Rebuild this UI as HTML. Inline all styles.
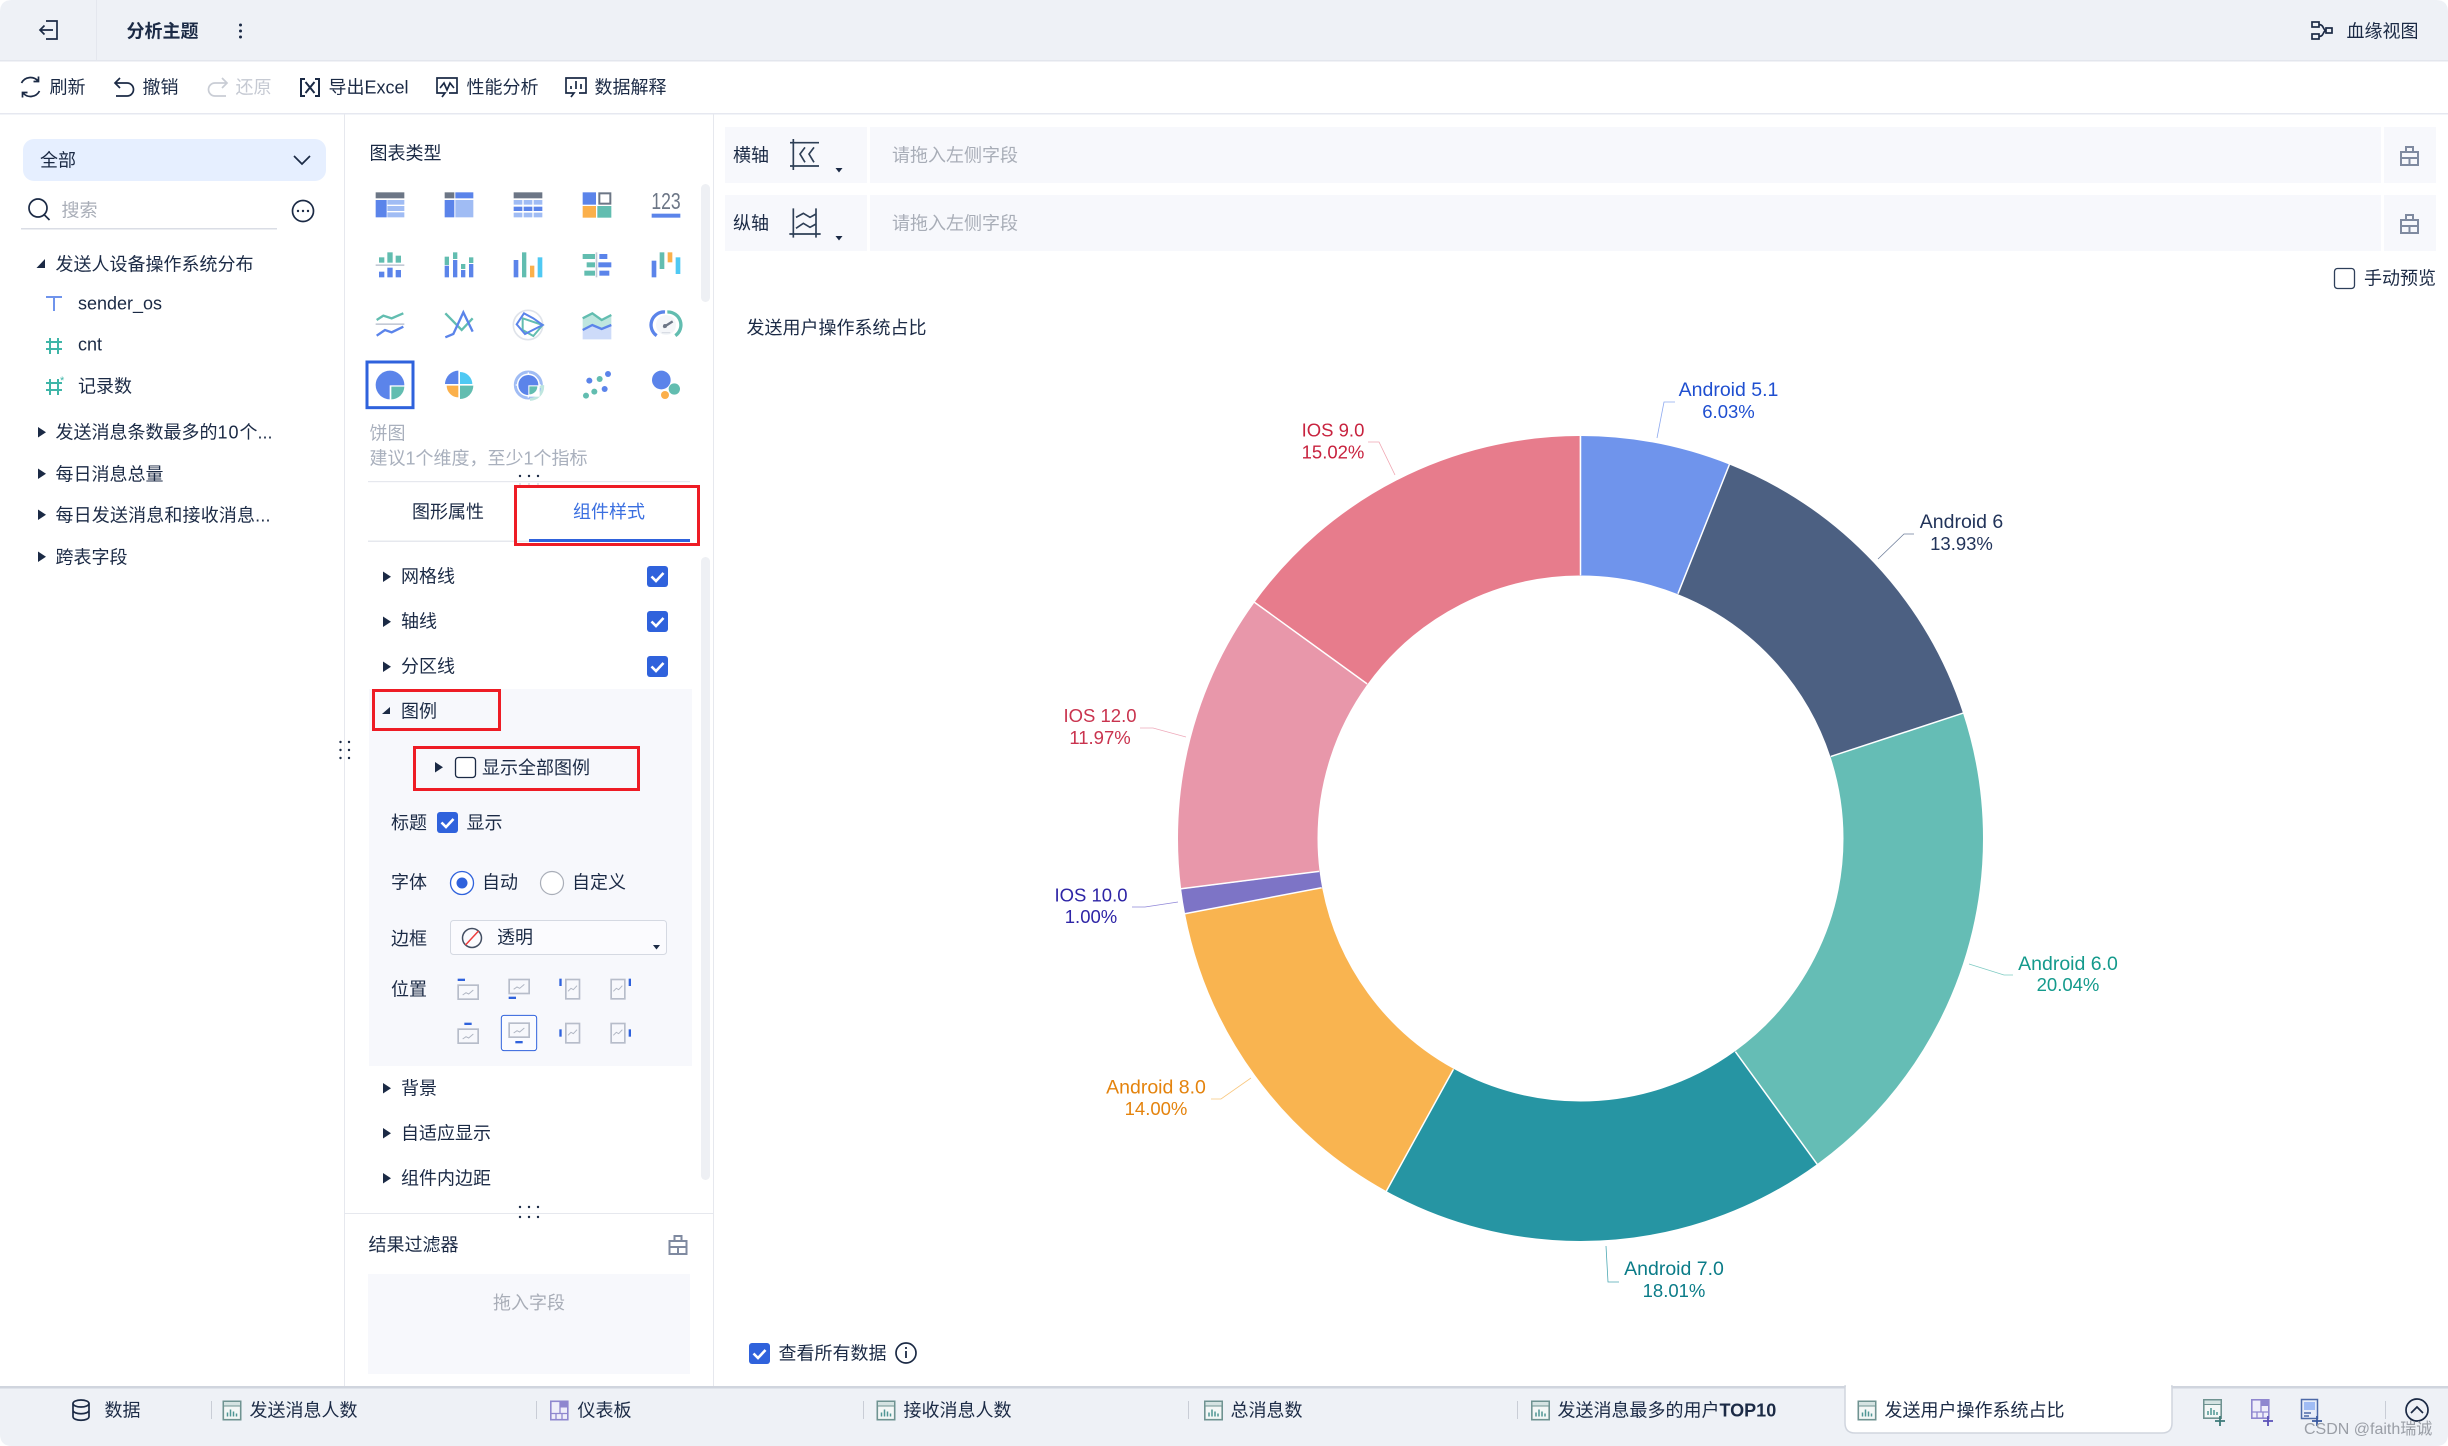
<!DOCTYPE html>
<html lang="zh"><head><meta charset="utf-8"><title>分析主题</title>
<style>
html,body{margin:0;padding:0;background:#fff;width:2448px;height:1446px;overflow:hidden}
svg{display:block;font-family:"Liberation Sans","Noto Sans CJK SC",sans-serif}
text{font-size:18px;fill:#1b2a45}
.p{fill:#a8adb7}.g{fill:#a9b0bd}
.l text{font-size:18.5px;text-anchor:middle}
.s{fill:none;stroke:#1b2a45;stroke-width:1.7}
.lead{fill:none;stroke-width:.8}
</style></head><body>
<svg width="2448" height="1446" viewBox="0 0 2448 1446" xmlns="http://www.w3.org/2000/svg">
<defs>
<g id="tabi"><rect x=".8" y=".8" width="17.4" height="18.4" fill="#f3f7f6" stroke="#6f9391" stroke-width="1.6"/><rect x="1" y="1" width="17" height="4.5" fill="#d5e3e2" stroke="#6f9391" stroke-width="1"/><path d="M5 16v-4M8 16v-7M11 16v-5M14 16v-3" stroke="#4f9694" stroke-width="1.5"/></g>
<g id="dash"><rect x=".8" y=".8" width="17" height="18.4" fill="#efeefa" stroke="#8f87cf" stroke-width="1.6"/><rect x="10" y="1" width="7.500" height="6" fill="#8f87cf"/><path d="M10 1v12M1 13h17M6 13v6M12 13v6" stroke="#8f87cf" stroke-width="1.3" fill="none"/></g>
<g id="suit" fill="none" stroke="#7f8aa0" stroke-width="2"><path d="M1 6h17v13H1zM6 6V1h7v5M1 12h17M9.5 12v7"/></g>
<polygon id="rt" points="0,-.5 8,4.7 0,10" fill="#1b2a45"/>
<polygon id="cr" points="0,0 7,0 3.5,4.5" fill="#1b2a45"/>
<g id="ck"><rect width="21" height="21" rx="3" fill="#2f62dc"/><path d="M4.5 10.5l4.5 4.5 7.5-8" fill="none" stroke="#fff" stroke-width="2.6"/></g>
<g id="fh"><rect x="2.5" y="2.5" width="60" height="42" fill="#f7f8fc" stroke="#b7bdca" stroke-width="5"/><path d="M16 32l10-7 8 4 14-12" fill="none" stroke="#b0b6c3" stroke-width="3"/></g>
<g id="fv"><rect x="2.5" y="2.5" width="41" height="58" fill="#f7f8fc" stroke="#b7bdca" stroke-width="5"/><path d="M9 38l9-9 7 4 11-12" fill="none" stroke="#b0b6c3" stroke-width="3"/></g>
</defs>

<rect width="2448" height="1446" fill="#fff"/>
<!-- header -->
<path d="M0 60V12Q0 0 12 0H2436Q2448 0 2448 12V60Z" fill="#eef1f6"/>
<rect y="60" width="2448" height="1.5" fill="#e3e6ed"/>
<rect x="96" y="0" width="1" height="60" fill="#e4e7ee"/>
<path class="s" d="M46 21H57V39H46M53 30H40M44.5 25.5L40 30l4.500 4.500"/>
<text x="126.500" y="37.500" font-weight="700">分析主题</text>
<g fill="#1b2a45"><circle cx="240.500" cy="25" r="1.500"/><circle cx="240.500" cy="31" r="1.500"/><circle cx="240.500" cy="37" r="1.500"/></g>
<g class="s"><rect x="2312" y="22" width="7" height="5"/><rect x="2312" y="34" width="7" height="5"/><rect x="2326" y="28" width="6" height="5"/><path d="M2319 24.500c5 0 4 6 7 6M2319 36.500c5 0 4-6 7-6"/></g>
<text x="2346.500" y="37.500">血缘视图</text>

<!-- toolbar -->
<rect y="113" width="2448" height="1.500" fill="#e6e8f0"/>
<g class="s">
<path d="M38 81a10 10 0 0 0-16.500 2M23 93a10 10 0 0 0 16.500-2M38.500 76.500V81.500H33.500M22.500 97.500V92.500H27.500"/>
<path d="M120 78l-5 5 5 5M115 83H127a6.500 6.500 0 0 1 0 13H116"/>
<path d="M222 78l5 5-5 5M227 83H215a6.500 6.500 0 0 0 0 13H226" stroke="#c9cdd5"/>
<path d="M305 79h-4v17h4M315 79h4v17h-4M305.500 82l9 11M314.500 82l-9 11" stroke-width="2"/>
<path d="M442 97l3-4h-8V78h20v15h-8"/><path d="M440 88l4-5 3 7 3-7 4 5"/>
<path d="M571 97l3-4h-8V78h20v15h-7"/><path d="M571 89v-3M576 89v-8M581 89v-5"/>
</g>
<text x="49.500" y="93.500">刷新</text><text x="142.500" y="93.500">撤销</text><text x="235.500" y="93.500" style="fill:#c6cad3">还原</text>
<text x="328.500" y="93.500">导出Excel</text><text x="466.500" y="93.500">性能分析</text><text x="594.500" y="93.500">数据解释</text>

<!-- panel borders -->
<rect x="344" y="114" width="1" height="1272" fill="#e6e8ee"/>
<rect x="713" y="114" width="1" height="1272" fill="#e6e8ee"/>

<!-- left tree -->
<rect x="23" y="139" width="303" height="42" rx="11" fill="#e6efff"/>
<text x="40" y="166.500">全部</text>
<path class="s" d="M294 156l8 8 8-8" stroke-width="1.900"/>
<circle class="s" cx="38" cy="208" r="9"/><path class="s" d="M44.500 215l5 5"/>
<text x="61.500" y="216.500" class="p">搜索</text>
<rect x="21" y="228" width="256" height="1.500" fill="#dadde5"/>
<circle class="s" cx="303" cy="211" r="10.500" stroke-width="1.500"/>
<g fill="#1b2a45"><circle cx="298" cy="211" r="1.200"/><circle cx="303" cy="211" r="1.200"/><circle cx="308" cy="211" r="1.200"/></g>
<polygon points="45,259 45,268 36.500,268" fill="#1b2a45"/>
<text x="55.500" y="270.500">发送人设备操作系统分布</text>
<path d="M46 297H62M54 297V311" stroke="#6f94ec" stroke-width="2" fill="none"/>
<text x="78" y="309.500">sender_os</text>
<path d="M46 342H62M46 349H62M50 338V354M58 338V354" stroke="#3fb6a8" stroke-width="2" fill="none"/>
<text x="78" y="350.500">cnt</text>
<path d="M46 383H62M46 390H62M50 379V395M58 379V395" stroke="#3fb6a8" stroke-width="2" fill="none"/>
<text x="60" y="384" style="font-size:11px;fill:#3fb6a8">*</text>
<text x="78" y="392.500">记录数</text>
<use href="#rt" x="38" y="427.500"/><text x="55.500" y="438.500">发送消息条数最多的<tspan letter-spacing="1">10</tspan>个...</text>
<use href="#rt" x="38" y="469"/><text x="55.500" y="480.500">每日消息总量</text>
<use href="#rt" x="38" y="510"/><text x="55.500" y="521.500" textLength="215">每日发送消息和接收消息...</text>
<use href="#rt" x="38" y="552"/><text x="55.500" y="563.500">跨表字段</text>

<!-- chart type panel -->
<text x="369.500" y="159.500">图表类型</text>
<rect x="701" y="184" width="9" height="118" rx="4.500" fill="#eef0f4"/>
<g transform="translate(340,130) scale(.33333)">
 <g>
 <rect x="107" y="187" width="86" height="18" fill="#6c7686"/><rect x="107" y="210" width="33" height="52" fill="#5b84ea"/><rect x="142" y="210" width="51" height="14" fill="#a0bcf4"/><rect x="142" y="228" width="51" height="15" fill="#a0bcf4"/><rect x="142" y="247" width="51" height="15" fill="#a0bcf4"/>
 <rect x="314" y="187" width="29" height="18" fill="#6c7686"/><rect x="346" y="187" width="54" height="18" fill="#5b84ea"/><rect x="314" y="210" width="29" height="52" fill="#5b84ea"/><rect x="346" y="210" width="54" height="52" fill="#a0bcf4"/>
 <rect x="521" y="187" width="86" height="18" fill="#6c7686"/>
 <g fill="#a0bcf4"><rect x="521" y="210" width="26" height="14"/><rect x="551" y="210" width="26" height="14"/><rect x="581" y="210" width="26" height="14"/><rect x="521" y="248" width="26" height="14"/><rect x="551" y="248" width="26" height="14"/><rect x="581" y="248" width="26" height="14"/></g>
 <g fill="#5b84ea"><rect x="521" y="230" width="26" height="13"/><rect x="551" y="230" width="26" height="13"/><rect x="581" y="230" width="26" height="13"/></g>
 <rect x="728" y="187" width="40" height="37" fill="#5b84ea"/><rect x="778" y="190" width="33" height="31" fill="none" stroke="#6c7686" stroke-width="6"/><rect x="728" y="228" width="40" height="35" fill="#fbb04b"/><rect x="772" y="228" width="42" height="35" fill="#62bdb0"/>
 <text x="934" y="237" textLength="88" lengthAdjust="spacingAndGlyphs" style="font-size:68px;fill:#6c7686">123</text><rect x="935" y="251" width="86" height="12" fill="#5b84ea"/>
 </g>
 <g>
 <g fill="#62bdb0"><rect x="117" y="382" width="16" height="16"/><rect x="142" y="367" width="16" height="31"/><rect x="167" y="377" width="16" height="21"/></g><rect x="107" y="403" width="86" height="5" fill="#c4cad6"/><g fill="#5b84ea"><rect x="117" y="425" width="16" height="17"/><rect x="142" y="413" width="16" height="29"/><rect x="167" y="420" width="16" height="22"/></g>
 <g fill="#62bdb0"><rect x="314" y="380" width="13" height="25"/><rect x="339" y="367" width="13" height="20"/><rect x="363" y="402" width="13" height="15"/><rect x="387" y="382" width="13" height="17"/></g><g fill="#5b84ea"><rect x="314" y="407" width="13" height="35"/><rect x="339" y="390" width="13" height="52"/><rect x="363" y="420" width="13" height="22"/><rect x="387" y="402" width="13" height="40"/></g>
 <rect x="521" y="390" width="14" height="52" fill="#5b84ea"/><rect x="546" y="367" width="13" height="75" fill="#62bdb0"/><rect x="570" y="407" width="13" height="35" fill="#fbb04b"/><rect x="593" y="382" width="14" height="60" fill="#4fc9f3"/>
 <g fill="#62bdb0"><rect x="728" y="372" width="37" height="15"/><rect x="740" y="397" width="25" height="15"/><rect x="733" y="422" width="32" height="15"/></g><rect x="767" y="367" width="5" height="75" fill="#c4cad6"/><g fill="#5b84ea"><rect x="778" y="372" width="24" height="15"/><rect x="775" y="397" width="39" height="15"/><rect x="778" y="422" width="30" height="15"/></g>
 <rect x="935" y="392" width="14" height="50" fill="#5b84ea"/><rect x="959" y="367" width="14" height="50" fill="#62bdb0"/><rect x="983" y="367" width="14" height="30" fill="#fbb04b"/><rect x="1007" y="382" width="14" height="50" fill="#4fc9f3"/>
 </g>
 <g fill="none" stroke-width="7">
 <path d="M110 570L130 557 155 565 190 550" stroke="#62bdb0"/><rect x="107" y="580" width="86" height="5" fill="#c4cad6" stroke="none"/><path d="M110 617L135 600 155 607 190 590" stroke="#5b84ea"/>
 <path d="M316 550L365 600 398 565" stroke="#62bdb0"/><path d="M316 622L340 612 370 547 398 605" stroke="#5b84ea"/>
 <circle cx="564" cy="585" r="44" stroke="#dfe3ea" stroke-width="5"/><path d="M548 565L608 585 580 618 548 600Z" stroke="#62bdb0" stroke-width="6"/><path d="M530 583L552 550 580 565 608 585 555 612Z" stroke="#5b84ea" stroke-width="6"/>
 <path d="M728 565L757 550 785 570 814 555V585L785 597 757 585 728 600Z" fill="#bfe6df" stroke="none"/><path d="M728 565L757 550 785 570 814 555" stroke="#62bdb0"/><path d="M728 600L757 585 785 597 814 585V628H728Z" fill="#cddbf9" stroke="none"/><path d="M728 600L757 585 785 597 814 585" stroke="#5b84ea"/>
 <circle cx="978" cy="585" r="30" fill="#f4f6f9" stroke="none"/>
 <path d="M950 617A39 39 0 0 1 975 546" stroke="#5b84ea" stroke-width="10"/><path d="M982 546A39 39 0 0 1 1006 617" stroke="#62bdb0" stroke-width="10"/><path d="M970 592L998 574" stroke="#6c7686" stroke-width="7"/><circle cx="975" cy="588" r="6" fill="#6c7686" stroke="none"/><path d="M965 608h26" stroke="#d8dce4" stroke-width="4"/>
 </g>
 <g>
 <rect x="81" y="696" width="138" height="137" fill="none" stroke="#2f62dc" stroke-width="9"/>
 <circle cx="150" cy="765" r="43" fill="#5b84ea"/><rect x="149" y="766" width="50" height="50" fill="#fff"/><path d="M154 770H193A39 39 0 0 1 154 808Z" fill="#62bdb0"/>
 <path d="M355 762H315A41 41 0 0 1 355 722Z" fill="#5b84ea"/><path d="M360 762V726A37 37 0 0 1 397 762Z" fill="#4fc9f3"/><path d="M355 767V802A35 35 0 0 1 320 767Z" fill="#fbb04b"/><path d="M360 767H400A40 40 0 0 1 360 807Z" fill="#62bdb0"/>
 <circle cx="565" cy="765" r="39" fill="none" stroke="#a0bcf4" stroke-width="9"/><path d="M570 770H608A38 38 0 0 1 570 808" fill="none" stroke="#bfe6df" stroke-width="9"/><path d="M527 765h76M565 727v76" stroke="#fff" stroke-width="4"/><circle cx="565" cy="765" r="30" fill="#5b84ea"/><rect x="565" y="766" width="34" height="34" fill="#fff"/><path d="M568 769H592A24 24 0 0 1 568 793Z" fill="#62bdb0"/>
 <circle cx="804" cy="732" r="9" fill="#5b84ea"/><circle cx="779" cy="747" r="9" fill="#62bdb0"/><circle cx="748" cy="752" r="9" fill="#5b84ea"/><circle cx="794" cy="777" r="9" fill="#5b84ea"/><circle cx="763" cy="785" r="9" fill="#62bdb0"/><circle cx="738" cy="797" r="9" fill="#62bdb0"/>
 <circle cx="964" cy="750" r="28" fill="#5b84ea"/><circle cx="1003" cy="777" r="17" fill="#62bdb0"/><circle cx="975" cy="795" r="12" fill="#fbb04b"/>
 </g>
</g>
<text x="369.500" y="439.500" class="g">饼图</text>
<text x="369.500" y="464.500" class="g">建议1个维度，至少1个指标</text>
<g fill="#1b2a45"><circle cx="520" cy="476" r="1.200"/><circle cx="529" cy="476" r="1.200"/><circle cx="538" cy="476" r="1.200"/></g>
<rect x="368" y="481" width="322" height="1.200" fill="#e6e8ee"/>
<g fill="#d9dce4"><circle cx="520" cy="484" r="1"/><circle cx="529" cy="484" r="1"/><circle cx="538" cy="484" r="1"/></g>

<!-- tabs -->
<text x="412" y="518">图形属性</text>
<text x="573" y="518" style="fill:#3a6fe0">组件样式</text>
<rect x="368" y="540.500" width="322" height="1.500" fill="#e6e8ee"/>
<rect x="529" y="539" width="161" height="3" fill="#2f62dc"/>
<rect x="701" y="557" width="9" height="623" rx="4.500" fill="#eef0f4"/>

<!-- property list -->
<use href="#rt" x="383" y="572"/><text x="401" y="582.500">网格线</text><use href="#ck" x="647" y="566"/>
<use href="#rt" x="383" y="617"/><text x="401" y="627.500">轴线</text><use href="#ck" x="647" y="611"/>
<use href="#rt" x="383" y="662"/><text x="401" y="672.500">分区线</text><use href="#ck" x="647" y="656"/>
<rect x="369" y="689" width="323" height="377" fill="#f7f8fc"/>
<polygon points="390,707 390,714 382,714" fill="#1b2a45"/><text x="401" y="717.500">图例</text>
<use href="#rt" x="435" y="762.500"/>
<rect x="455.500" y="757.500" width="20" height="20" rx="3" fill="#fff" stroke="#1b2a45" stroke-width="1.300"/>
<text x="482" y="774">显示全部图例</text>
<text x="391" y="829">标题</text><use href="#ck" x="437" y="812"/><text x="466.500" y="829">显示</text>
<text x="391" y="888.500">字体</text>
<circle cx="462" cy="883" r="11.500" fill="#fff" stroke="#2f62dc" stroke-width="1.300"/><circle cx="462" cy="883" r="5.500" fill="#2f62dc"/>
<text x="482" y="888.500">自动</text>
<circle cx="552" cy="883" r="11.500" fill="#fff" stroke="#a9aeb8" stroke-width="1.200"/>
<text x="572" y="888.500">自定义</text>
<text x="391" y="945">边框</text>
<rect x="450.500" y="920.500" width="216" height="34" rx="3" fill="#fbfbfe" stroke="#d5d9e2"/>
<circle cx="472" cy="938" r="9.500" fill="none" stroke="#444f63" stroke-width="1.500"/><path d="M465.500 945L478.500 931" stroke="#ee3d3d" stroke-width="1.500"/>
<text x="497" y="943.500">透明</text>
<use href="#cr" x="653" y="945"/>
<text x="391" y="995.500">位置</text>
<g transform="translate(340,840) scale(.33333)">
 <use href="#fh" x="352" y="433"/><rect x="353" y="416" width="22" height="7" fill="#2f62dc"/>
 <use href="#fh" x="505" y="416"/><rect x="506" y="470" width="22" height="7" fill="#2f62dc"/>
 <use href="#fv" x="675" y="416"/><rect x="658" y="416" width="7" height="22" fill="#2f62dc"/>
 <use href="#fv" x="811" y="416"/><rect x="866" y="416" width="7" height="22" fill="#2f62dc"/>
 <use href="#fh" x="352" y="565"/><rect x="373" y="548" width="22" height="7" fill="#2f62dc"/>
 <rect x="484" y="526" width="106" height="106" rx="8" fill="#fafbff" stroke="#2f62dc" stroke-width="3"/>
 <use href="#fh" x="505" y="547"/><rect x="526" y="603" width="22" height="7" fill="#2f62dc"/>
 <use href="#fv" x="675" y="548"/><rect x="658" y="568" width="7" height="22" fill="#2f62dc"/>
 <use href="#fv" x="811" y="548"/><rect x="866" y="568" width="7" height="22" fill="#2f62dc"/>
</g>
<use href="#rt" x="383" y="1083.500"/><text x="401" y="1094.500">背景</text>
<use href="#rt" x="383" y="1128.500"/><text x="401" y="1139.500">自适应显示</text>
<use href="#rt" x="383" y="1173.500"/><text x="401" y="1184.500">组件内边距</text>
<g fill="#1b2a45"><circle cx="520" cy="1207" r="1.200"/><circle cx="529" cy="1207" r="1.200"/><circle cx="538" cy="1207" r="1.200"/><circle cx="520" cy="1217" r="1.200"/><circle cx="529" cy="1217" r="1.200"/><circle cx="538" cy="1217" r="1.200"/>
<circle cx="340.500" cy="742" r="1.200"/><circle cx="349" cy="742" r="1.200"/><circle cx="340.500" cy="750" r="1.200"/><circle cx="349" cy="750" r="1.200"/><circle cx="340.500" cy="758" r="1.200"/><circle cx="349" cy="758" r="1.200"/></g>
<rect x="345" y="1213" width="368" height="1" fill="#e6e8ee"/>
<text x="368.500" y="1251">结果过滤器</text>
<use href="#suit" x="668.500" y="1235"/>
<rect x="368" y="1274" width="322" height="100" fill="#f7f8fc"/>
<text x="493" y="1309" class="p">拖入字段</text>

<!-- red annotation boxes -->
<g fill="none" stroke="#ee1c25" stroke-width="3">
<rect x="515.500" y="486.500" width="183" height="58"/>
<rect x="373.500" y="690.500" width="126" height="39"/>
<rect x="414.500" y="747.500" width="224" height="42"/>
</g>

<!-- axis fields -->
<rect x="725" y="127" width="142" height="56" fill="#f7f8fc"/><rect x="870" y="127" width="1511" height="56" fill="#f7f8fc"/><rect x="2384" y="127" width="52" height="56" fill="#f7f8fc"/>
<rect x="725" y="195" width="142" height="56" fill="#f7f8fc"/><rect x="870" y="195" width="1511" height="56" fill="#f7f8fc"/><rect x="2384" y="195" width="52" height="56" fill="#f7f8fc"/>
<text x="733" y="161.500">横轴</text><text x="733" y="229.500">纵轴</text>
<g transform="translate(710,110) scale(.33333)" fill="none" stroke="#2e3f56" stroke-width="5">
 <path d="M250 87V180M240 98H327M240 168H327M285 112L270 132 285 157M312 112L297 132 312 157"/>
 <path d="M250 295V383M318 295V383M238 372H332M258 322L280 310 300 322 318 312M258 355L280 340 300 352 318 342"/>
</g>
<use href="#cr" x="835.500" y="168"/><use href="#cr" x="835.500" y="236"/>
<text x="892" y="161.500" class="p">请拖入左侧字段</text><text x="892" y="229.500" class="p">请拖入左侧字段</text>
<use href="#suit" x="2400" y="146"/><use href="#suit" x="2400" y="214"/>
<rect x="2334.500" y="268.500" width="20" height="20" rx="3" fill="#fff" stroke="#2e3f5a" stroke-width="1.300"/>
<text x="2364" y="284.500">手动预览</text>
<text x="746.500" y="334">发送用户操作系统占比</text>

<!-- donut -->
<g fill="none" stroke-width="139.500" transform="rotate(-90 1580.500 838.500)">
<circle cx="1580.500" cy="838.500" r="332.750" pathLength="100" stroke="#6f94ec" stroke-dasharray="6.03 100"/>
<circle cx="1580.500" cy="838.500" r="332.750" pathLength="100" stroke="#4c6082" stroke-dasharray="13.93 100" stroke-dashoffset="-6.03"/>
<circle cx="1580.500" cy="838.500" r="332.750" pathLength="100" stroke="#65bdb5" stroke-dasharray="20.04 100" stroke-dashoffset="-19.96"/>
<circle cx="1580.500" cy="838.500" r="332.750" pathLength="100" stroke="#2695a3" stroke-dasharray="18.01 100" stroke-dashoffset="-40"/>
<circle cx="1580.500" cy="838.500" r="332.750" pathLength="100" stroke="#f9b450" stroke-dasharray="14 100" stroke-dashoffset="-58.01"/>
<circle cx="1580.500" cy="838.500" r="332.750" pathLength="100" stroke="#7d74c6" stroke-dasharray="1 100" stroke-dashoffset="-72.01"/>
<circle cx="1580.500" cy="838.500" r="332.750" pathLength="100" stroke="#e897aa" stroke-dasharray="11.97 100" stroke-dashoffset="-73.01"/>
<circle cx="1580.500" cy="838.500" r="332.750" pathLength="100" stroke="#e77c8c" stroke-dasharray="15.02 100" stroke-dashoffset="-84.98"/>
</g>
<g stroke="#fff" stroke-width="1.500">
<line x1="1580.500" y1="575" x2="1580.500" y2="435"/>
<line x1="1580.500" y1="575" x2="1580.500" y2="435" transform="rotate(21.708 1580.500 838.500)"/>
<line x1="1580.500" y1="575" x2="1580.500" y2="435" transform="rotate(71.856 1580.500 838.500)"/>
<line x1="1580.500" y1="575" x2="1580.500" y2="435" transform="rotate(144 1580.500 838.500)"/>
<line x1="1580.500" y1="575" x2="1580.500" y2="435" transform="rotate(208.836 1580.500 838.500)"/>
<line x1="1580.500" y1="575" x2="1580.500" y2="435" transform="rotate(259.236 1580.500 838.500)"/>
<line x1="1580.500" y1="575" x2="1580.500" y2="435" transform="rotate(262.836 1580.500 838.500)"/>
<line x1="1580.500" y1="575" x2="1580.500" y2="435" transform="rotate(305.928 1580.500 838.500)"/>
</g>
<g class="lead">
<path d="M1675 402H1664L1657 438" stroke="#8eaaf0"/>
<path d="M1914 534H1904L1878 559" stroke="#6f7f9b"/>
<path d="M2013 975H2004L1969 964" stroke="#7fcbc3"/>
<path d="M1619 1282H1608L1606 1246" stroke="#4fa9b4"/>
<path d="M1211 1099H1221L1251 1078" stroke="#f9c77e"/>
<path d="M1132 907H1145L1178 902" stroke="#8f86d8"/>
<path d="M1140 728H1153L1186 737" stroke="#eeaabb"/>
<path d="M1368 442H1379L1395 475" stroke="#f0a5b1"/>
</g>
<g class="l">
<text x="1728.500" y="396" style="fill:#1f4fd0;font-size:19.500px">Android 5.1</text><text x="1728.500" y="418" style="fill:#1f4fd0">6.03%</text>
<text x="1961.500" y="528" style="fill:#22345a;font-size:19.500px">Android 6</text><text x="1961.500" y="550" style="fill:#22345a">13.93%</text>
<text x="2068" y="970" style="fill:#149a8c;font-size:19.500px">Android 6.0</text><text x="2068" y="991" style="fill:#149a8c">20.04%</text>
<text x="1674" y="1275" style="fill:#0b7c88;font-size:19.500px">Android 7.0</text><text x="1674" y="1297" style="fill:#0b7c88">18.01%</text>
<text x="1156" y="1093.500" style="fill:#e4830d;font-size:19.500px">Android 8.0</text><text x="1156" y="1115" style="fill:#e4830d">14.00%</text>
<text x="1091" y="901.500" style="fill:#2e25a6">IOS 10.0</text><text x="1091" y="923" style="fill:#2e25a6">1.00%</text>
<text x="1100" y="722" style="fill:#c9334e">IOS 12.0</text><text x="1100" y="744" style="fill:#c9334e">11.97%</text>
<text x="1333" y="436.500" style="fill:#c8233f">IOS 9.0</text><text x="1333" y="458.500" style="fill:#c8233f">15.02%</text>
</g>

<use href="#ck" x="749" y="1343"/>
<text x="778.500" y="1359.500">查看所有数据</text>
<circle class="s" cx="906" cy="1353" r="10" stroke-width="1.400"/>
<path d="M906 1351v7M906 1347v2" stroke="#1b2a45" stroke-width="1.800"/>

<!-- bottom bar -->
<path d="M0 1386H2448V1434Q2448 1446 2436 1446H12Q0 1446 0 1434Z" fill="#eef1f6"/>
<rect y="1386" width="2448" height="2.500" fill="#d0d5de"/>
<g class="s" stroke-width="2"><ellipse cx="81" cy="1403.500" rx="8" ry="3.500"/><path d="M73 1403.500v13c0 5 16 5 16 0v-13M73 1410c0 5 16 5 16 0"/></g>
<text x="104.500" y="1416.500">数据</text>
<g fill="#c9cdd6"><rect x="211" y="1401" width="1" height="18"/><rect x="536" y="1401" width="1" height="18"/><rect x="863" y="1401" width="1" height="18"/><rect x="1188" y="1401" width="1" height="18"/><rect x="1517" y="1401" width="1" height="18"/><rect x="2385" y="1401" width="1" height="18"/></g>
<use href="#tabi" x="222.500" y="1400.500"/><text x="249.500" y="1416.500">发送消息人数</text>
<use href="#dash" x="550" y="1400.500"/><text x="577.500" y="1416.500">仪表板</text>
<use href="#tabi" x="876.500" y="1400.500"/><text x="903.500" y="1416.500">接收消息人数</text>
<use href="#tabi" x="1204" y="1400.500"/><text x="1230.500" y="1416.500">总消息数</text>
<use href="#tabi" x="1531" y="1400.500"/><text x="1557.500" y="1416.500">发送消息最多的用户<tspan font-weight="700">TOP10</tspan></text>
<path d="M1845 1386V1423Q1845 1433 1855 1433H2162Q2172 1433 2172 1423V1386Z" fill="#fff" stroke="#d0d5de" stroke-width="1.500"/>
<rect x="1846" y="1384" width="325" height="4" fill="#fff"/>
<use href="#tabi" x="1857.500" y="1400.500"/><text x="1884.500" y="1416.500">发送用户操作系统占比</text>
<use href="#tabi" x="2203" y="1399"/><path d="M2220 1416v10M2215 1421h10" stroke="#3c7a78" stroke-width="1.800"/>
<use href="#dash" x="2251" y="1399"/><path d="M2268 1416v10M2263 1421h10" stroke="#5a50b8" stroke-width="1.800"/>
<g fill="none" stroke="#4d6aa8" stroke-width="1.500"><rect x="2301.500" y="1399.500" width="16" height="19" fill="#e7edf9"/><rect x="2304" y="1402" width="11" height="8" fill="#a0bcf4" stroke="none"/><path d="M2304 1413h7M2304 1416h5"/></g><path d="M2317 1416v10M2312 1421h10" stroke="#3a5aa0" stroke-width="1.800"/>
<circle class="s" cx="2417" cy="1410" r="11" stroke-width="1.500"/><path class="s" d="M2411 1413l6-6 6 6" stroke-width="1.800"/>
<text x="2304" y="1434" style="font-size:16px;fill:#9a9ea6">CSDN @faith瑞诚</text>
</svg>
</body></html>
